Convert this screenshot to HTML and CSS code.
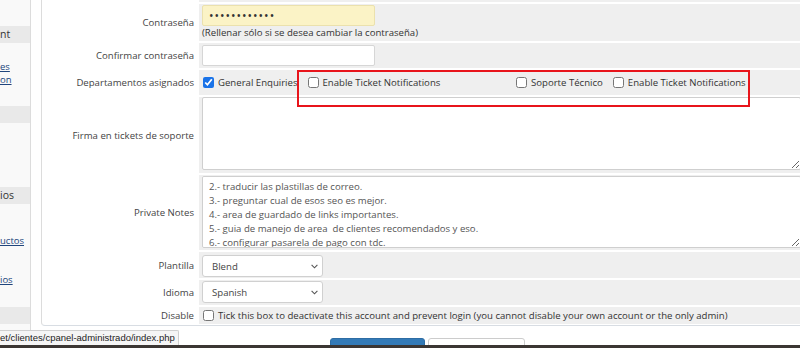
FILE: index.html
```html
<!DOCTYPE html>
<html lang="es">
<head>
  <meta charset="UTF-8">
  <meta name="viewport" content="width=device-width, initial-scale=1.0">
  <title>Editar administrador</title>
  <link rel="stylesheet" href="styles.css">
</head>
<body>
  <div class="screen">
    <div class="app">
      <div class="sidebar">
        <div class="side-head first">nt</div>
        <div class="side-links">
          <a href="#">es</a>
          <a href="#">on</a>
        </div>
        <div class="side-head second"></div>
        <div class="side-head third">ios</div>
        <div class="side-links tall">
          <a href="#">uctos</a>
          <a href="#" class="far">ios</a>
        </div>
        <div class="side-head fourth"></div>
      </div>

      <div class="content">
        <div class="panel">
          <div class="form">
            <div class="label stub"></div>
            <div class="field stub"></div>

            <div class="label">Contraseña</div>
            <div class="field pass">
              <input type="password" class="text-input filled" value="123456789012">
              <div class="help">(Rellenar sólo si se desea cambiar la contraseña)</div>
            </div>

            <div class="label">Confirmar contraseña</div>
            <div class="field confirm">
              <input type="password" class="text-input">
            </div>

            <div class="label">Departamentos asignados</div>
            <div class="field depts">
              <div class="dept">
                <label class="check"><input type="checkbox" checked> General Enquiries</label>
                <label class="check"><input type="checkbox"> Enable Ticket Notifications</label>
              </div>
              <div class="dept">
                <label class="check"><input type="checkbox"> Soporte Técnico</label>
                <label class="check"><input type="checkbox"> Enable Ticket Notifications</label>
              </div>
            </div>

            <div class="label">Firma en tickets de soporte</div>
            <div class="field signature">
              <textarea class="area sig-area"></textarea>
            </div>

            <div class="label">Private Notes</div>
            <div class="field notes">
              <textarea class="area notes-area">2.- traducir las plastillas de correo.
3.- preguntar cual de esos seo es mejor.
4.- area de guardado de links importantes.
5.- guia de manejo de area  de clientes recomendados y eso.
6.- configurar pasarela de pago con tdc.






</textarea>
            </div>

            <div class="label">Plantilla</div>
            <div class="field template">
              <div class="select-box">
                <select><option>Blend</option></select>
                <svg class="chevron" width="7" height="5" viewBox="0 0 7 5"><path d="M0.6 0.8 L3.5 3.8 L6.4 0.8" fill="none" stroke="#555" stroke-width="1.1"/></svg>
              </div>
            </div>

            <div class="label">Idioma</div>
            <div class="field language">
              <div class="select-box">
                <select><option>Spanish</option></select>
                <svg class="chevron" width="7" height="5" viewBox="0 0 7 5"><path d="M0.6 0.8 L3.5 3.8 L6.4 0.8" fill="none" stroke="#555" stroke-width="1.1"/></svg>
              </div>
            </div>

            <div class="label">Disable</div>
            <div class="field disable">
              <label class="check"><input type="checkbox"> Tick this box to deactivate this account and prevent login (you cannot disable your own account or the only admin)</label>
            </div>
          </div>
        </div>

        <div class="buttons">
          <button class="btn primary" aria-label="Guardar cambios"></button>
          <button class="btn" aria-label="Cancelar"></button>
        </div>
      </div>

      <!-- highlight drawn over the departments row -->
      <div class="highlight"></div>
      <div class="status">et/clientes/cpanel-administrado/index.php</div>
    </div>
    <div class="taskbar"></div>
  </div>
</body>
</html>
```

FILE: styles.css
```css
body {
  margin: 0;
  padding: 0;
  font-family: "Open Sans", Arial, sans-serif;
  font-size: 9.6px;
  color: #333;
  background-color: #fff;
  overflow: hidden;
}

.screen {
  width: 800px;
  height: 348px;
  display: flex;
  flex-direction: column;
  overflow: hidden;
}

.app {
  position: relative;
  height: 345px;
  display: flex;
  overflow: hidden;
}

/* left menu, only its right edge is in view */
.sidebar {
  width: 30px;
  flex-shrink: 0;
  background-color: #f9f9f9;
  border-right: 1px solid #dcdcdc;
  padding-top: 26px;
  overflow: hidden;
}

.side-head {
  height: 17px;
  line-height: 17px;
  background-color: #e9e9e9;
  font-size: 10.5px;
  color: #333;
  white-space: nowrap;
}

.side-head.second {
  margin-top: 20px;
}

.side-head.third {
  margin-top: 64px;
}

.side-head.fourth {
  margin-top: 21px;
}

.side-links {
  display: flex;
  flex-direction: column;
  padding-top: 17px;
}

.side-links.tall {
  padding-top: 30px;
}

.side-links a {
  line-height: 13px;
  font-size: 9.5px;
  color: #20457c;
  white-space: nowrap;
}

.side-links a.far {
  margin-top: 26px;
}

.content {
  width: 773px;
  flex-shrink: 0;
  margin-left: 10px;
}

.panel {
  border-left: 1px solid #dcdcdc;
  border-bottom: 1px solid #d8dde3;
  border-bottom-left-radius: 4px;
  padding-bottom: 1px;
}

.form {
  display: grid;
  grid-template-columns: 157px 1fr;
  row-gap: 2px;
}

.label {
  display: flex;
  align-items: center;
  justify-content: flex-end;
  padding-right: 5px;
  color: #444;
  white-space: nowrap;
}

.field {
  background-color: #efefef;
  padding: 0 3px;
}

.stub {
  height: 2px;
}

.field.pass {
  padding-top: 1px;
  padding-bottom: 3px;
}

.field.confirm {
  padding-top: 2px;
  padding-bottom: 2px;
}

.text-input {
  display: block;
  box-sizing: border-box;
  width: 173px;
  height: 21px;
  margin: 0;
  padding: 0 7px;
  border: 1px solid #d6d6d6;
  border-radius: 2px;
  background-color: #fff;
  font-family: "Open Sans", Arial, sans-serif;
  font-size: 9.6px;
  color: #333;
}

.text-input.filled {
  padding-left: 6px;
  background-color: #fbf3c6;
  border-color: #ebe1ad;
  font-size: 12px;
  letter-spacing: 1px;
}

.help {
  line-height: 12px;
  margin-top: 1px;
  color: #333;
}

.field.pass {
  padding-bottom: 2px;
}

.field.depts {
  height: 25px;
  display: flex;
  align-items: center;
  padding-left: 4px;
}

.dept {
  width: 313px;
  display: flex;
  gap: 10px;
}

.check {
  display: flex;
  align-items: center;
  gap: 4px;
  color: #333;
  white-space: nowrap;
}

.check input {
  width: 11px;
  height: 11px;
  margin: 0;
  accent-color: #1a73e8;
}

.area {
  display: block;
  box-sizing: border-box;
  width: 599px;
  margin: 0;
  padding: 3px 6px 0;
  border: 1px solid #cfcfcf;
  border-radius: 2px;
  background-color: #fff;
  font-family: "Open Sans", Arial, sans-serif;
  font-size: 9.6px;
  line-height: 14px;
  color: #555;
}

.area::-webkit-scrollbar {
  width: 6px;
}

.area::-webkit-scrollbar-track {
  background-color: #f3f3f3;
}

.area::-webkit-scrollbar-thumb {
  background-color: #c6c6c6;
}

.field.signature {
  padding-bottom: 3px;
}

.sig-area {
  height: 73px;
}

.field.notes {
  padding-top: 1px;
  padding-bottom: 2px;
}

.notes-area {
  height: 72px;
  overflow-y: scroll;
}

.field.template {
  padding-top: 3px;
  padding-bottom: 1px;
}

.field.language {
  padding-top: 1px;
  padding-bottom: 2px;
}

.select-box {
  position: relative;
  width: 121px;
}

.select-box select {
  display: block;
  width: 121px;
  height: 22px;
  margin: 0;
  padding: 0 9px;
  -webkit-appearance: none;
  appearance: none;
  border: 1px solid #d0d0d0;
  border-radius: 3px;
  background-color: #fff;
  font-family: "Open Sans", Arial, sans-serif;
  font-size: 9.6px;
  color: #444;
}

.chevron {
  position: absolute;
  right: 5px;
  top: 9px;
}

.field.disable {
  height: 17px;
  display: flex;
  align-items: center;
  padding-left: 4px;
}

.buttons {
  display: flex;
  justify-content: center;
  gap: 3px;
  margin-top: 12px;
}

.btn {
  width: 97px;
  height: 24px;
  border: 1px solid #ccc;
  border-radius: 3px;
  background-color: #fff;
}

.btn.primary {
  width: 95px;
  background-color: #337ab7;
  border-color: #2e6da4;
}

.highlight {
  position: absolute;
  left: 297px;
  top: 70px;
  width: 449px;
  height: 33px;
  border: 2px solid #e8141b;
}

.status {
  position: absolute;
  left: 0;
  bottom: 0;
  height: 14px;
  line-height: 14px;
  padding: 0 3px 0 0;
  background-color: #f5f5f5;
  border-top: 1px solid #cfcfcf;
  border-right: 1px solid #cfcfcf;
  border-top-right-radius: 2px;
  font-family: "Liberation Sans", Arial, sans-serif;
  font-size: 9.5px;
  color: #222;
  white-space: nowrap;
}

.taskbar {
  height: 3px;
  background-color: #3b3633;
}
```
